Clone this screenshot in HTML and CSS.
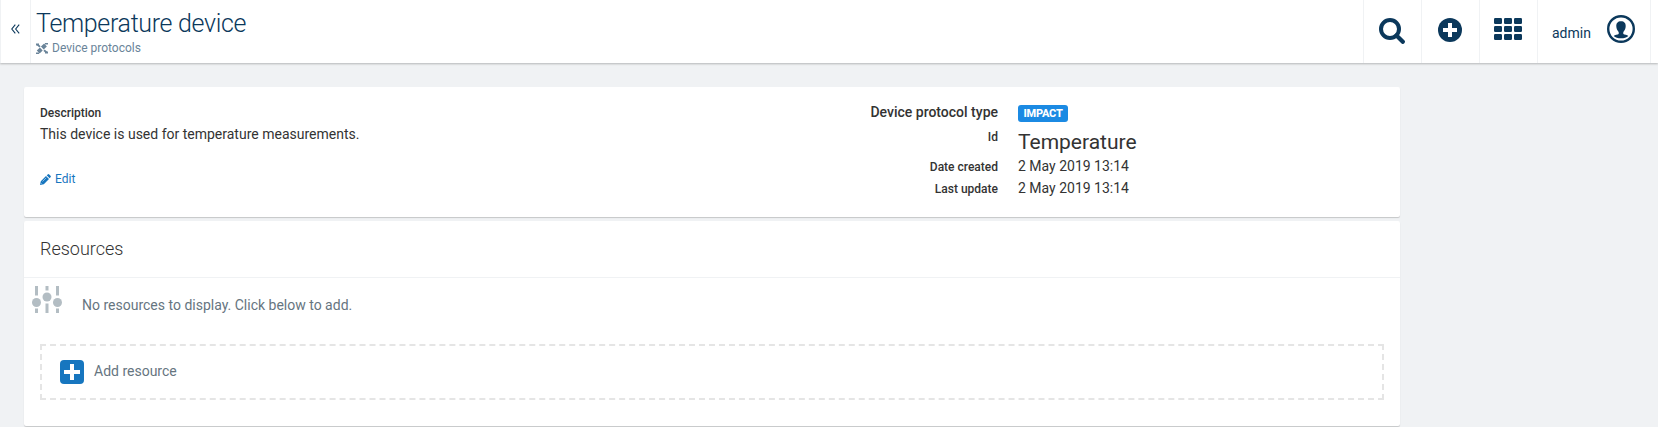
FILE: index.html
```html
<!DOCTYPE html>
<html lang="en">
<head>
<meta charset="utf-8">
<title>Temperature device</title>
<link rel="stylesheet" href="styles.css">
</head>
<body>
<header class="topbar">
  <div class="collapse">
    <svg width="9" height="10" viewBox="0 0 9 10"><path d="M4.300.7.8 5l3.500 4.300M8.200.7 4.700 5l3.500 4.300" fill="none" stroke="#0b385b" stroke-width="1.1"/></svg>
  </div>
  <div class="heading">
    <h1 class="title">Temperature device</h1>
    <div class="crumb">
      <svg width="12" height="11" viewBox="0 0 12 11"><g fill="none" stroke="#6a8499"><path d="M2.200 9 5.300 6M6.300 5 9.500 2" stroke-width="4"/><path d="M0 10.300h3M9 .7h3" stroke-width="1.400"/><path d="M1.500 1.500 4 3.800M8 7.300l2.500 2" stroke-width="1.800"/><path d="M0 1.500h3M9 9.500h3" stroke-width="1.800"/></g></svg>
      <span class="crumb-text">Device protocols</span>
    </div>
  </div>
  <nav class="actions">
    <div class="action search">
      <svg width="26" height="26" viewBox="0 0 26 26"><circle cx="11" cy="11" r="9" fill="none" stroke="#0b385b" stroke-width="4"/><path d="m17.500 17.500 6.300 6.300" stroke="#0b385b" stroke-width="4.200" stroke-linecap="round"/></svg>
    </div>
    <div class="action add">
      <svg width="24" height="24" viewBox="0 0 24 24"><circle cx="12" cy="12" r="12" fill="#0b385b"/><path d="M12 5v14M5 12h14" stroke="#fff" stroke-width="4"/></svg>
    </div>
    <div class="action apps">
      <svg width="28" height="22" viewBox="0 0 28 22" fill="#0b385b"><rect width="8" height="6" rx="1.2"/><rect x="10" width="8" height="6" rx="1.2"/><rect x="20" width="8" height="6" rx="1.2"/><rect y="8" width="8" height="6" rx="1.2"/><rect x="10" y="8" width="8" height="6" rx="1.2"/><rect x="20" y="8" width="8" height="6" rx="1.2"/><rect y="16" width="8" height="6" rx="1.2"/><rect x="10" y="16" width="8" height="6" rx="1.2"/><rect x="20" y="16" width="8" height="6" rx="1.2"/></svg>
    </div>
    <div class="action user">
      <span class="user-name">admin</span>
      <svg width="28" height="28" viewBox="0 0 28 28"><circle cx="14" cy="14" r="12.800" fill="none" stroke="#0b385b" stroke-width="2.400"/><path d="M14 6.300c3.200 0 4.900 2 4.700 5-.1 2.400-1 4.300-2.400 5.600v2c1 .8 4 .8 5 2.100-1.500 1.500-4.400 2.300-7.300 2.300s-5.800-.8-7.300-2.300c1-1.300 4-1.300 5-2.100v-2c-1.400-1.300-2.300-3.200-2.400-5.600-.2-3 1.500-5 4.700-5z" fill="#0b385b"/></svg>
    </div>
  </nav>
</header>
<main class="content">
  <section class="card details">
    <div class="about">
      <div class="label">Description</div>
      <div class="text">This device is used for temperature measurements.</div>
      <div class="edit">
        <svg width="11" height="11" viewBox="0 0 11 11" fill="#1776bf"><path d="M.8 7.200 6 2l3 3-5.200 5.200L0 11zM6.700 1.300 7.700.4q.8-.7 1.500 0l1.300 1.300q.7.700 0 1.500l-.9 1z"/><path d="m2.500 7.500 3.700-3.700M1 9.200l.9.900" stroke="#fff" stroke-width=".5"/></svg>
        <span class="edit-text">Edit</span>
      </div>
    </div>
    <div class="props">
      <div class="key key-type">Device protocol type</div><div class="value"><span class="badge">IMPACT</span></div>
      <div class="key key-id">Id</div><div class="value value-id">Temperature</div>
      <div class="key">Date created</div><div class="value value-date">2 May 2019 13:14</div>
      <div class="key">Last update</div><div class="value value-date">2 May 2019 13:14</div>
    </div>
  </section>
  <section class="card resources">
    <h2 class="resources-title">Resources</h2>
    <div class="empty">
      <svg width="30" height="27" viewBox="0 0 30 27"><g stroke="#b3bdc3" stroke-width="3"><path d="M4.500 0v9.500M4.500 22.500V27M15 0v4.500M15 17.500V27M25.500 0v9.500M25.500 22.500V27"/></g><g fill="#b3bdc3"><circle cx="4.500" cy="16.500" r="4.500"/><circle cx="15" cy="11" r="4.500"/><circle cx="25.500" cy="16.500" r="4.500"/></g></svg>
      <span class="empty-text">No resources to display. Click below to add.</span>
    </div>
    <div class="add-box">
      <svg width="24" height="24" viewBox="0 0 24 24"><rect width="24" height="24" rx="4" fill="#1776bf"/><path d="M12 4v16M4 12h16" stroke="#fff" stroke-width="4"/></svg>
      <span class="add-text">Add resource</span>
    </div>
  </section>
</main>
</body>
</html>
```

FILE: styles.css
```css
* { box-sizing: border-box; }
body {
  margin: 0;
  height: 427px;
  overflow: hidden;
  background: #f0f2f4;
  color: #333;
  font: 14px/20px Roboto, sans-serif;
}
svg { display: block; flex: none; }
.topbar {
  display: flex;
  height: 63px;
  background: #fff;
  color: #0b385b;
  box-shadow: 0 1px 2px rgba(0, 0, 0, .25);
}
.collapse {
  width: 31px;
  padding: 24px 0 0 10px;
  border-left: 1px solid #f0f2f4;
  border-right: 1px solid #f0f2f4;
}
.heading { padding: 8px 0 0 5px; }
.title { margin: 0; font-size: 25px; line-height: 32px; font-weight: 300; letter-spacing: -.33px; white-space: nowrap; }
.crumb { display: flex; align-items: center; gap: 4px; height: 16px; color: #6a8499; font-size: 12px; }
.actions { display: flex; margin-left: auto; padding-right: 7px; }
.action { width: 58px; border-left: 1px solid #f0f2f4; padding-top: 18px; }
.search { padding-left: 15px; }
.add { padding-left: 16px; }
.apps { padding-left: 14px; }
.user { display: flex; justify-content: space-between; width: 114px; padding: 15px 15px 0 14px; border-right: 1px solid #f0f2f4; }
.user-name { padding-top: 8px; }
.content { display: flex; flex-direction: column; gap: 4px; width: 1400px; padding: 24px 0 0 24px; }
.card { background: #fff; border-radius: 2px; box-shadow: 0 1px 1px rgba(0, 0, 0, .18); }
.details { display: flex; height: 130px; padding: 16px; }
.about { width: 760px; }
.label { font-size: 12px; font-weight: 500; }
.text { margin-top: 1px; }
.edit { display: flex; align-items: center; gap: 4px; margin-top: 25px; color: #1776bf; font-size: 12px; }
.props { display: grid; grid-template-columns: 198px auto; grid-template-rows: 23px 31px 22px 22px; column-gap: 20px; }
.key { text-align: right; font-size: 12px; font-weight: 500; }
.key-type { margin-top: -1px; font-size: 14px; }
.key-id { padding-top: 1px; }
.value-date { margin-top: -1px; }
.value-id { font-size: 21px; line-height: 33px; }
.badge { display: block; width: 50px; height: 17px; margin-top: 2px; border-radius: 3px; background: #1b8ae3; color: #fff; font-size: 11px; line-height: 17px; font-weight: 800; text-align: center; letter-spacing: -.2px; }
.resources { height: 205px; }
.resources-title { margin: 0; height: 57px; padding: 18px 16px 0; border-bottom: 1px solid #f0f2f4; font-size: 18px; font-weight: 300; }
.empty { display: flex; gap: 20px; height: 66px; padding: 8px 0 0 8px; color: #66757f; }
.empty-text { padding-top: 9px; }
.add-box { display: flex; gap: 10px; height: 56px; margin: 0 16px; padding: 14px 18px; border: 2px dashed #e5e5e5; color: #66757f; }
.add-text { padding-top: 1px; }
```
